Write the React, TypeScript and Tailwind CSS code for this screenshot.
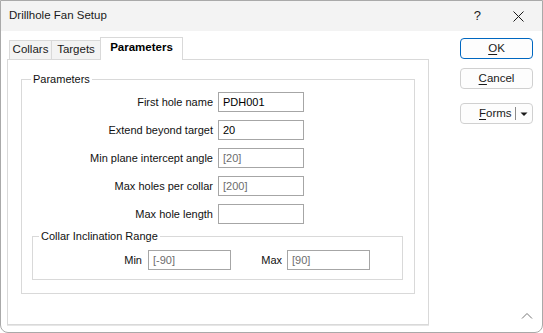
import React from "react"

const ui = { fontFamily: '"Liberation Sans", Arial, sans-serif' }

function Field({ label, value, disabled }: { label: string; value?: string; disabled?: boolean }) {
  return (
    <div className="flex h-[20px] items-center">
      <div className="w-[181px] text-right text-[11px] text-[#111]">{label}</div>
      <div
        className={
          "ml-[5px] flex h-[20px] w-[86px] items-center border border-[#a6a6a6] bg-white pl-[4px] text-[11px] " +
          (disabled ? "text-[#6d6d6d]" : "text-black")
        }
      >
        {value}
      </div>
    </div>
  )
}

function DlgButton({ children, primary }: { children: React.ReactNode; primary?: boolean }) {
  return (
    <div
      className={
        "flex h-[21px] w-[73px] items-center justify-center rounded-[4px] border bg-[#fdfdfd] text-[11.5px] text-[#1a1a1a] " +
        (primary ? "border-[#0067c0]" : "border-[#d0d0d0]")
      }
    >
      {children}
    </div>
  )
}

export default function App() {
  return (
    <div
      className="relative h-[333px] w-[543px] overflow-hidden rounded-b-[8px] border border-[#a9a9a9] bg-white"
      style={ui}
    >
      {/* title bar */}
      <div className="flex h-[30px] items-center bg-[#f3f3f3] pl-[8px]">
        <div className="text-[11.5px] text-[#1a1a1a]">Drillhole Fan Setup</div>
        <div className="ml-auto flex items-center">
          <span className="mr-[32px] text-[13px] text-[#1a1a1a]">?</span>
          <svg width="11" height="11" viewBox="0 0 11 11" className="mr-[18px]">
            <path d="M0.5 0.5 L10.5 10.5 M10.5 0.5 L0.5 10.5" stroke="#1a1a1a" strokeWidth="1" />
          </svg>
        </div>
      </div>

      <div className="flex pl-[6px]">
        {/* left: tabs + panel */}
        <div className="w-[422px]">
          <div className="mt-[7px] flex h-[21px] items-end pl-[2px] text-[11.5px]">
            <div className="flex h-[19px] w-[43px] items-center justify-center border border-b-0 border-[#d9d9d9] bg-[#f3f3f3] text-[#1a1a1a]">
              Collars
            </div>
            <div className="-ml-px flex h-[19px] w-[50px] items-center justify-center border border-b-0 border-[#d9d9d9] bg-[#f3f3f3] text-[#1a1a1a]">
              Targets
            </div>
            <div className="relative z-10 -mb-px -ml-px flex h-[23px] w-[83px] items-center justify-center border border-b-0 border-[#d9d9d9] bg-white pb-[2px] font-bold text-black">
              Parameters
            </div>
          </div>

          <div className="h-[266px] border border-[#d9d9d9] bg-white pt-[12px] shadow-[0_1px_0_#e6e6e6]">
            <fieldset className="mx-[13px] border border-[#d9d9d9] pb-[13px] pl-[10px] pr-[11px]">
              <legend className="ml-[-1px] px-[2px] text-[11px] leading-[14px] text-[#111]">Parameters</legend>
              <div className="flex flex-col gap-[8px] pt-[6px]">
                <Field label="First hole name" value="PDH001" />
                <Field label="Extend beyond target" value="20" />
                <Field label="Min plane intercept angle" value="[20]" disabled />
                <Field label="Max holes per collar" value="[200]" disabled />
                <Field label="Max hole length" />
              </div>

              <fieldset className="mt-[5px] border border-[#d9d9d9] pb-[9px] pl-[6px]">
                <legend className="px-[2px] text-[11px] leading-[14px] text-[#111]">Collar Inclination Range</legend>
                <div className="mt-[7px] flex h-[20px] items-center text-[11px]">
                  <div className="w-[103px] text-right text-[#111]">Min</div>
                  <div className="ml-[6px] flex h-[20px] w-[83px] items-center border border-[#a6a6a6] pl-[4px] text-[#6d6d6d]">
                    [-90]
                  </div>
                  <div className="w-[51px] text-right text-[#111]">Max</div>
                  <div className="ml-[5px] flex h-[20px] w-[83px] items-center border border-[#a6a6a6] pl-[4px] text-[#6d6d6d]">
                    [90]
                  </div>
                </div>
              </fieldset>
            </fieldset>
          </div>
        </div>

        {/* right: buttons */}
        <div className="ml-[31px] mt-[7px] flex flex-col">
          <DlgButton primary>
            <span>
              <span className="underline underline-offset-2">O</span>K
            </span>
          </DlgButton>
          <div className="mt-[9px]">
            <DlgButton>
              <span>
                <span className="underline underline-offset-2">C</span>ancel
              </span>
            </DlgButton>
          </div>
          <div className="mt-[14px] flex h-[21px] w-[73px] items-center rounded-[4px] border border-[#d0d0d0] bg-[#fdfdfd] text-[11.5px] text-[#1a1a1a]">
            <div className="flex-1 pl-[18px]">
              <span className="underline underline-offset-2">F</span>orms
            </div>
            <div className="h-[13px] w-px bg-[#8a8a8a]" />
            <svg width="16" height="8" viewBox="0 0 16 8">
              <path d="M4.5 2.5 L11.5 2.5 L8 6 Z" fill="#1a1a1a" />
            </svg>
          </div>
        </div>
      </div>

      <svg width="12" height="8" viewBox="0 0 12 8" className="absolute bottom-[12px] right-[9px]">
        <path d="M1 6.5 L6 1.5 L11 6.5" stroke="#777" strokeWidth="1" fill="none" />
      </svg>
    </div>
  )
}
